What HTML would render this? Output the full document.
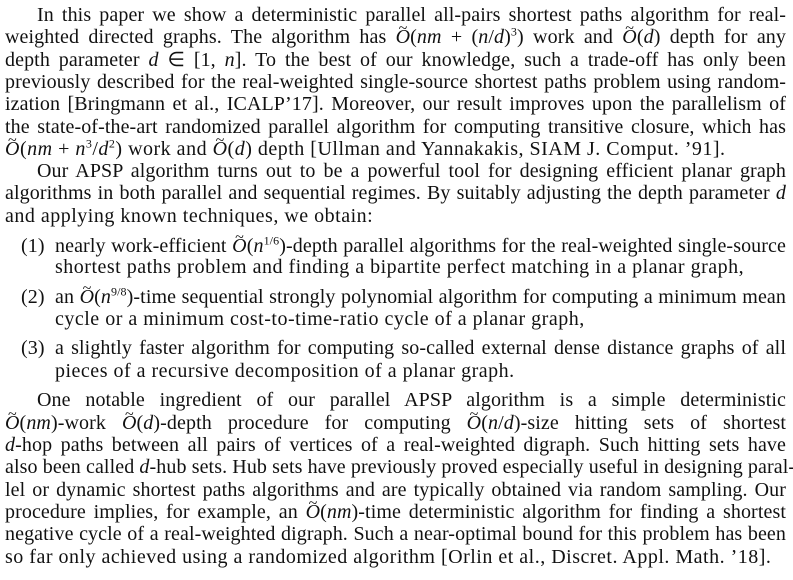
<!DOCTYPE html>
<html><head><meta charset="utf-8"><style>
html,body{margin:0;padding:0;background:#fff;}
body{width:793px;height:580px;position:relative;overflow:hidden;font-family:"Liberation Serif",serif;font-size:20px;letter-spacing:0.1px;color:#111;}
.l{position:absolute;left:5px;width:781px;height:22px;line-height:22px;white-space:nowrap;text-align:justify;text-align-last:justify;}
.i{left:37px;width:749px;}
.it{left:55px;width:731px;}
.n{position:absolute;left:21px;line-height:22px;}
.e{text-align-last:left;letter-spacing:0.5px;}
i{font-style:italic;}
.t{position:relative;display:inline-block;}
.t:before{content:"~";position:absolute;left:3px;top:-8px;font-size:16px;font-style:normal;}
sup{font-size:12px;line-height:0;}
</style></head><body>
<div class="l i" style="top:4px">In this paper we show a deterministic parallel all-pairs shortest paths algorithm for real-</div>
<div class="l" style="top:26px">weighted directed graphs. The algorithm has <span class="t"><i>O</i></span>(<i>nm</i> + (<i>n</i>/<i>d</i>)<sup>3</sup>) work and <span class="t"><i>O</i></span>(<i>d</i>) depth for any</div>
<div class="l" style="top:49px">depth parameter <i>d</i> ∈ [1, <i>n</i>]. To the best of our knowledge, such a trade-off has only been</div>
<div class="l" style="top:71px">previously described for the real-weighted single-source shortest paths problem using random-</div>
<div class="l" style="top:93px">ization [Bringmann et al., ICALP’17]. Moreover, our result improves upon the parallelism of</div>
<div class="l" style="top:116px">the state-of-the-art randomized parallel algorithm for computing transitive closure, which has</div>
<div class="l e" style="top:138px"><span class="t"><i>O</i></span>(<i>nm</i> + <i>n</i><sup>3</sup>/<i>d</i><sup>2</sup>) work and <span class="t"><i>O</i></span>(<i>d</i>) depth [Ullman and Yannakakis, SIAM J. Comput. ’91].</div>
<div class="l i" style="top:160px">Our APSP algorithm turns out to be a powerful tool for designing efficient planar graph</div>
<div class="l" style="top:182px">algorithms in both parallel and sequential regimes. By suitably adjusting the depth parameter <i>d</i></div>
<div class="l e" style="top:205px">and applying known techniques, we obtain:</div>
<div class="n" style="top:235px">(1)</div>
<div class="l it" style="top:235px">nearly work-efficient <span class="t"><i>O</i></span>(<i>n</i><sup>1/6</sup>)-depth parallel algorithms for the real-weighted single-source</div>
<div class="l it e" style="top:256px">shortest paths problem and finding a bipartite perfect matching in a planar graph,</div>
<div class="n" style="top:286px">(2)</div>
<div class="l it" style="top:286px">an <span class="t"><i>O</i></span>(<i>n</i><sup>9/8</sup>)-time sequential strongly polynomial algorithm for computing a minimum mean</div>
<div class="l it e" style="top:308px">cycle or a minimum cost-to-time-ratio cycle of a planar graph,</div>
<div class="n" style="top:337px">(3)</div>
<div class="l it" style="top:337px">a slightly faster algorithm for computing so-called external dense distance graphs of all</div>
<div class="l it e" style="top:360px">pieces of a recursive decomposition of a planar graph.</div>
<div class="l i" style="top:389px">One notable ingredient of our parallel APSP algorithm is a simple deterministic</div>
<div class="l" style="top:412px"><span class="t"><i>O</i></span>(<i>nm</i>)-work <span class="t"><i>O</i></span>(<i>d</i>)-depth procedure for computing <span class="t"><i>O</i></span>(<i>n</i>/<i>d</i>)-size hitting sets of shortest</div>
<div class="l" style="top:434px"><i>d</i>-hop paths between all pairs of vertices of a real-weighted digraph. Such hitting sets have</div>
<div class="l" style="top:456px">also been called <i>d</i>-hub sets. Hub sets have previously proved especially useful in designing paral-</div>
<div class="l" style="top:479px">lel or dynamic shortest paths algorithms and are typically obtained via random sampling. Our</div>
<div class="l" style="top:501px">procedure implies, for example, an <span class="t"><i>O</i></span>(<i>nm</i>)-time deterministic algorithm for finding a shortest</div>
<div class="l" style="top:523px">negative cycle of a real-weighted digraph. Such a near-optimal bound for this problem has been</div>
<div class="l e" style="top:546px">so far only achieved using a randomized algorithm [Orlin et al., Discret. Appl. Math. ’18].</div>
</body></html>
